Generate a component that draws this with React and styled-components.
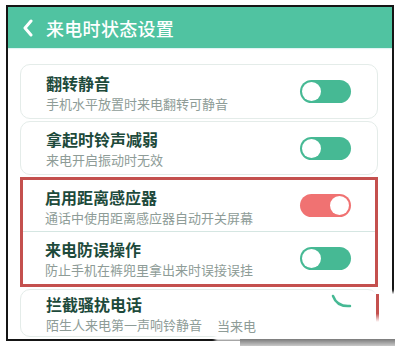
import React from "react";
import styled, { createGlobalStyle } from "styled-components";

const Global = createGlobalStyle`
  html, body { margin: 0; padding: 0; background: #ffffff; }
  body { font-family: "Noto Sans CJK SC", "Noto Sans", sans-serif; }
  * { box-sizing: border-box; }
`;

const Page = styled.div`
  position: relative;
  width: 400px;
  height: 349px;
  overflow: hidden;
  background: #fff;
  padding: 5px 0 0 6px;
`;

const Frame = styled.div`
  width: 388px;
  height: 336px;
  border: 2px solid #151515;
  background: #fff;
  overflow: hidden;
  display: flex;
  flex-direction: column;
`;

const Header = styled.div`
  height: 41px;
  flex: none;
  background: #50c3a1;
  display: flex;
  align-items: center;
  padding-left: 14px;
  gap: 12px;
  box-shadow: 0 1px 1px #dff3f3;
`;

const Title = styled.div`
  color: #fff;
  font-size: 18px;
  font-weight: 500;
  letter-spacing: 0.3px;
`;

const List = styled.div`
  display: flex;
  flex-direction: column;
  gap: 2px;
  padding: 16px 14px 0 12px;
`;

const Card = styled.div`
  height: ${(p) => p.$h}px;
  border: 1px solid #e4ece9;
  border-radius: 10px;
  background: #fff;
  display: flex;
  align-items: center;
  justify-content: space-between;
  padding: 0 26px 0 25px;
`;

const Highlight = styled.div`
  height: 110px;
  border: 3px solid #c4504e;
  display: flex;
  flex-direction: column;
`;

const Row = styled.div`
  height: ${(p) => p.$h}px;
  display: flex;
  align-items: center;
  justify-content: space-between;
  padding: 0 24px 0 22px;
  border-top: ${(p) => (p.$divided ? "1px solid #d5e6e2" : "none")};
`;

const Texts = styled.div`
  display: flex;
  flex-direction: column;
  margin-top: 3px;
`;

const ItemTitle = styled.div`
  font-size: 16px;
  line-height: 21px;
  font-weight: 700;
  color: #1d4a3b;
`;

const ItemSub = styled.div`
  font-size: 13px;
  line-height: 20px;
  color: #8e9c97;
  white-space: nowrap;
`;

const Track = styled.div`
  width: 51px;
  height: 23px;
  border-radius: 12px;
  background: ${(p) => (p.$red ? "#f07272" : "#46b994")};
  display: flex;
  align-items: center;
  justify-content: ${(p) => (p.$on ? "flex-end" : "flex-start")};
  padding: 0 2px;
  flex: none;
`;

const Thumb = styled.div`
  width: 19px;
  height: 19px;
  border-radius: 50%;
  background: #fff;
`;

const Patch = styled.div`
  position: absolute;
  left: 217px;
  top: 294px;
  width: 181px;
  height: 45px;
  background: #fff;
  box-shadow: 0 0 3px 2px #fff;
`;

const PatchText = styled.div`
  position: absolute;
  left: 0;
  top: 23px;
  font-size: 13px;
  line-height: 18px;
  color: #8e9c97;
  white-space: nowrap;
`;

const PatchLine = styled.div`
  position: absolute;
  left: 159px;
  top: 0;
  width: 3px;
  height: 28px;
  background: linear-gradient(to bottom, #c4504e 70%, rgba(196, 80, 78, 0));
`;

const Arc = styled.svg`
  position: absolute;
  left: 114px;
  top: 0;
`;

const Shadow = styled.div`
  position: absolute;
  left: 240px;
  top: 339px;
  width: 155px;
  height: 7px;
  background: linear-gradient(to bottom, #7a7a7a, #c9c9c9);
  filter: blur(0.6px);
`;

function Toggle({ on, red }) {
  return (
    <Track $on={on} $red={red}>
      <Thumb />
    </Track>
  );
}

function Texty({ title, sub }) {
  return (
    <Texts>
      <ItemTitle>{title}</ItemTitle>
      <ItemSub>{sub}</ItemSub>
    </Texts>
  );
}

export default function App() {
  return (
    <>
      <Global />
      <Page>
        <Frame>
          <Header>
            <svg width="12" height="18" viewBox="0 0 12 18">
              <polyline
                points="9,2 3,9 9,16"
                fill="none"
                stroke="#fff"
                strokeWidth="3"
                strokeLinecap="round"
                strokeLinejoin="round"
              />
            </svg>
            <Title>来电时状态设置</Title>
          </Header>
          <List>
            <Card $h={55}>
              <Texty title="翻转静音" sub="手机水平放置时来电翻转可静音" />
              <Toggle />
            </Card>
            <Card $h={54}>
              <Texty title="拿起时铃声减弱" sub="来电开启振动时无效" />
              <Toggle />
            </Card>
            <Highlight>
              <Row $h={51}>
                <Texty title="启用距离感应器" sub="通话中使用距离感应器自动开关屏幕" />
                <Toggle on red />
              </Row>
              <Row $h={53} $divided>
                <Texty title="来电防误操作" sub="防止手机在裤兜里拿出来时误接误挂" />
                <Toggle />
              </Row>
            </Highlight>
            <Card $h={48}>
              <Texty title="拦截骚扰电话" sub="陌生人来电第一声响铃静音" />
            </Card>
          </List>
        </Frame>
        <Patch>
          <PatchText>当来电</PatchText>
          <PatchLine />
          <Arc width="24" height="16" viewBox="0 0 24 16">
            <path d="M2 2 Q6 13 19 12" fill="none" stroke="#46b994" strokeWidth="2.5" strokeLinecap="round" />
          </Arc>
        </Patch>
        <Shadow />
      </Page>
    </>
  );
}
